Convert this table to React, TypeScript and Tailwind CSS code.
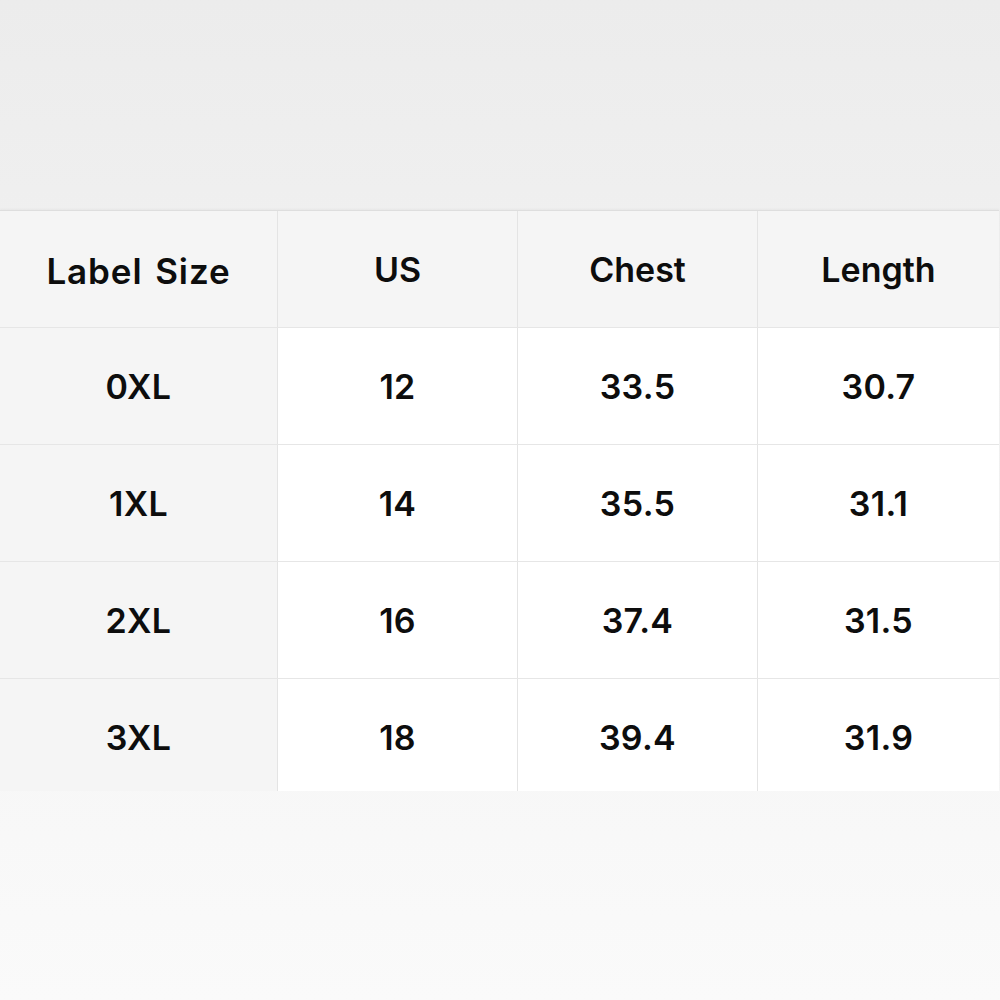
import React from "react";

const header = ["Label Size", "US", "Chest", "Length"];
const rows = [
  ["0XL", "12", "33.5", "30.7"],
  ["1XL", "14", "35.5", "31.1"],
  ["2XL", "16", "37.4", "31.5"],
  ["3XL", "18", "39.4", "31.9"],
];

export default function App() {
  return (
    <div
      className="w-[1000px] h-[1000px] flex flex-col bg-gradient-to-b from-[#ececec] via-[#f4f4f4] to-[#fafafa] text-[#0d0d0d]"
      style={{ fontFamily: "Inter, 'Noto Sans', sans-serif" }}
    >
      <div className="h-[210px]" />
      <div className="w-[999px] border-t border-[#dedede] shadow-[0_-1px_2px_rgba(0,0,0,0.04)]">
        <div className="grid grid-cols-[278px_240px_240px_241px] h-[117px] bg-[#f5f5f5] border-b border-[#e6e6e6]">
          {header.map((h, i) => (
            <div
              key={h}
              className={`flex items-center justify-center text-[34px] font-semibold ${i < 3 ? "border-r border-[#e4e4e4]" : ""}`}
            >
              <span className={i === 0 ? "mt-[4px] text-[35px] tracking-[0.9px] [word-spacing:3px]" : ""}>{h}</span>
            </div>
          ))}
        </div>
        {rows.map((r, ri) => (
          <div
            key={r[0]}
            className={`grid grid-cols-[278px_240px_240px_241px] ${ri === 3 ? "h-[112px]" : "h-[117px] border-b border-[#e6e6e6]"}`}
          >
            {r.map((c, ci) => (
              <div
                key={ci}
                className={`flex items-center justify-center text-[34px] font-semibold tracking-[0.3px] ${ci === 0 ? "bg-[#f5f5f5]" : "bg-white"} ${ci < 3 ? "border-r border-[#e4e4e4]" : ""}`}
              >
                <span className={ri === 3 ? "mt-[4px]" : ""}>{c}</span>
              </div>
            ))}
          </div>
        ))}
      </div>
    </div>
  );
}
